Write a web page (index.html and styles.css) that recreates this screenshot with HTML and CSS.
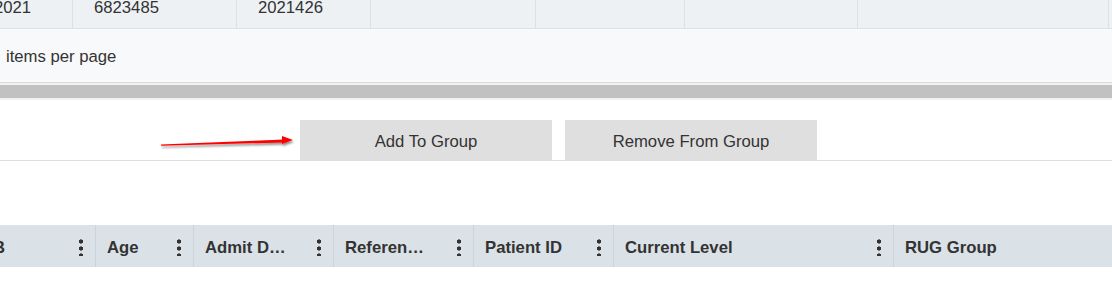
FILE: index.html
```html
<!DOCTYPE html>
<html lang="en">

<head>
    <meta charset="utf-8">
    <meta name="viewport" content="width=device-width, initial-scale=1">
    <title>Patient Groups</title>
    <link rel="stylesheet" href="styles.css">
</head>

<body>
    <div class="result-grid">
        <div class="grid-row">
            <div class="cell c1">2021</div>
            <div class="cell c2">6823485</div>
            <div class="cell c3">2021426</div>
            <div class="cell c4"></div>
            <div class="cell c5"></div>
            <div class="cell c6"></div>
            <div class="cell c7"></div>
            <div class="cell c8"></div>
        </div>
        <div class="pager">items per page</div>
        <div class="scroll-track">
            <div class="scroll-thumb"></div>
        </div>
    </div>

    <div class="toolbar">
        <svg class="arrow" width="160" height="30" viewBox="0 0 160 30">
            <defs>
                <filter id="shadow" x="-10%" y="-50%" width="120%" height="200%">
                    <feDropShadow dx="1" dy="2" stdDeviation="1.2" flood-color="#000" flood-opacity="0.45" />
                </filter>
            </defs>
            <g filter="url(#shadow)">
                <polygon points="11,14.6 134,9.6 134,12.4 11,15.8" fill="#f00" />
                <polygon points="132,6 143,10 132,14" fill="#f00" />
            </g>
        </svg>
        <button type="button" class="btn">Add To Group</button>
        <button type="button" class="btn">Remove From Group</button>
    </div>

    <div class="group-grid">
        <div class="head-row">
            <div class="head h1"><span>DOB</span><i class="menu"></i></div>
            <div class="head h2"><span>Age</span><i class="menu"></i></div>
            <div class="head h3"><span>Admit D…</span><i class="menu"></i></div>
            <div class="head h3"><span>Referen…</span><i class="menu"></i></div>
            <div class="head h3"><span>Patient ID</span><i class="menu"></i></div>
            <div class="head h4"><span>Current Level</span><i class="menu"></i></div>
            <div class="head h5"><span>RUG Group</span></div>
        </div>
    </div>
</body>

</html>
```

FILE: styles.css
```css
body {
    margin: 0;
    padding: 0;
    background-color: #FFFFFF;
    color: #333333;
    font-family: "Liberation Sans", Arial, sans-serif;
    font-size: 16.7px;
    overflow: hidden;
}

/* grid above is scrolled, only the end of it shows */
.result-grid {
    margin-top: -16px;
}

.grid-row {
    display: flex;
    height: 45px;
    margin-left: -27px;
    background-color: #eef1f4;
    border-bottom: 1px solid #dde1e5;
    box-sizing: border-box;
}

.cell {
    flex: none;
    display: flex;
    align-items: center;
    padding: 4px 0 0 21px;
    border-right: 1px solid #dde1e5;
    box-sizing: border-box;
}

.c1 { width: 100px; }
.c2 { width: 164px; }
.c3 { width: 134px; }
.c4 { width: 165px; }
.c5 { width: 149px; }
.c6 { width: 173px; }
.c7 { width: 251px; }
.c8 { flex: 1; border-right: none; }

.pager {
    display: flex;
    align-items: center;
    height: 54px;
    padding: 2px 0 0 6px;
    background-color: #f8f9fa;
    border-bottom: 1px solid #d9dadb;
    box-sizing: border-box;
}

.scroll-track {
    padding: 2px 0;
    background-color: #f1f1f1;
}

.scroll-thumb {
    height: 13px;
    background-color: #c1c1c1;
}

.toolbar {
    position: relative;
    display: flex;
    gap: 13px;
    padding: 20px 0 0 300px;
    border-bottom: 1px solid #dddddd;
}

.arrow {
    position: absolute;
    left: 150px;
    top: 30px;
}

.btn {
    width: 252px;
    height: 40px;
    border: none;
    border-radius: 0;
    background-color: #dfdfdf;
    color: #333333;
    font-family: "Liberation Sans", Arial, sans-serif;
    font-size: 16.7px;
    padding: 3px 0 0 0;
}

.group-grid {
    margin-top: 64px;
}

.head-row {
    display: flex;
    height: 42px;
    margin-left: -43px;
    background-color: #dae1e7;
}

.head {
    flex: none;
    display: flex;
    align-items: center;
    justify-content: space-between;
    padding: 0 12px 0 11px;
    border-right: 1px solid #ccd3d9;
    box-sizing: border-box;
    font-weight: bold;
    white-space: nowrap;
}

.head span {
    padding-top: 3px;
}

.h1 { width: 139px; }
.h2 { width: 98px; }
.h3 { width: 140px; }
.h4 { width: 280px; }
.h5 { flex: 1; border-right: none; }

.menu {
    width: 4px;
    height: 18px;
    margin-top: 1px;
    background: radial-gradient(circle, #333333 1.9px, transparent 2.3px) 0 0 / 4px 7px repeat-y;
}
```
